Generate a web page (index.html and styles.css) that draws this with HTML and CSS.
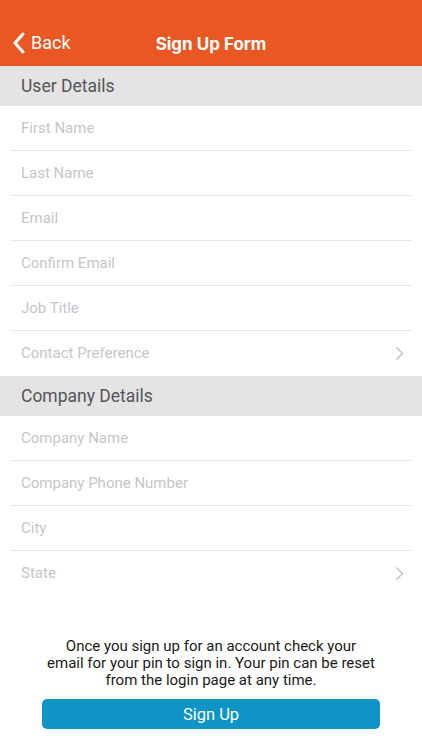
FILE: index.html
```html
<!DOCTYPE html>
<html lang="en">
<head>
  <meta charset="UTF-8" />
  <title>Sign Up Form</title>
  <link rel="stylesheet" href="styles.css">
</head>
<body>
  <div class="screen">
    <header class="nav">
      <a class="back" href="#">
        <svg width="14" height="22" viewBox="0 0 14 22"><path d="M11 2 L3 11 L11 20" fill="none" stroke="#fff" stroke-width="3" stroke-linecap="round" stroke-linejoin="round"/></svg>
        <span>Back</span>
      </a>
      <h1>Sign Up Form</h1>
    </header>

    <div class="section-title">User Details</div>
    <ul class="list">
      <li>First Name</li>
      <li>Last Name</li>
      <li>Email</li>
      <li>Confirm Email</li>
      <li>Job Title</li>
      <li class="picker">Contact Preference
        <svg class="chev" width="9" height="15" viewBox="0 0 9 15"><path d="M1.5 1.5 L7.5 7.5 L1.5 13.5" fill="none" stroke="#c4c4c8" stroke-width="1.6"/></svg>
      </li>
    </ul>

    <div class="section-title">Company Details</div>
    <ul class="list">
      <li>Company Name</li>
      <li>Company Phone Number</li>
      <li>City</li>
      <li class="picker">State
        <svg class="chev" width="9" height="15" viewBox="0 0 9 15"><path d="M1.5 1.5 L7.5 7.5 L1.5 13.5" fill="none" stroke="#c4c4c8" stroke-width="1.6"/></svg>
      </li>
    </ul>

    <footer class="footer">
      <p>Once you sign up for an account check your email for your pin to sign in. Your pin can be reset from the login page at any time.</p>
      <button class="signup">Sign Up</button>
    </footer>
  </div>
</body>
</html>
```

FILE: styles.css
```css
body {
  margin: 0;
  font-family: Roboto, Inter, "Liberation Sans", sans-serif;
  background: #fff;
}
.screen {
  width: 422px;
  height: 750px;
  display: flex;
  flex-direction: column;
  overflow: hidden;
}
.nav {
  height: 66px;
  background: #e95822;
  color: #fff;
  position: relative;
  display: flex;
  align-items: flex-end;
  justify-content: center;
  box-sizing: border-box;
  padding-bottom: 12px;
}
.nav h1 {
  margin: 0;
  font-family: Inter, Roboto, sans-serif;
  font-size: 17px;
  font-weight: 700;
  line-height: 20px;
}
.back {
  position: absolute;
  left: 12px;
  bottom: 12px;
  display: flex;
  align-items: center;
  gap: 5px;
  color: #fff;
  text-decoration: none;
  font-size: 18px;
  line-height: 20px;
}
.section-title {
  height: 40px;
  background: #e4e4e4;
  color: #555;
  font-size: 17.5px;
  padding-left: 21px;
  display: flex;
  align-items: center;
}
.list {
  list-style: none;
  margin: 0;
  padding: 0;
}
.list li {
  height: 45px;
  padding: 0 21px 1px;
  box-sizing: border-box;
  display: flex;
  align-items: center;
  justify-content: space-between;
  color: #c6c6c9;
  font-size: 15px;
  position: relative;
}
.list li + li::before {
  content: "";
  position: absolute;
  top: -1px;
  left: 10px;
  right: 10px;
  height: 1px;
  background: #e8e8ea;
}
.chev {
  margin-right: -3px;
}
.footer {
  margin-top: auto;
  padding: 0 42px 21px;
  text-align: center;
}
.footer p {
  width: 330px;
  margin: 0 auto 10px;
  font-size: 15px;
  line-height: 17px;
  color: #1a1a1a;
}
.signup {
  width: 100%;
  height: 30px;
  border: none;
  border-radius: 5px;
  background: #0e95c6;
  color: #fff;
  font-family: inherit;
  font-size: 16.5px;
}
```
